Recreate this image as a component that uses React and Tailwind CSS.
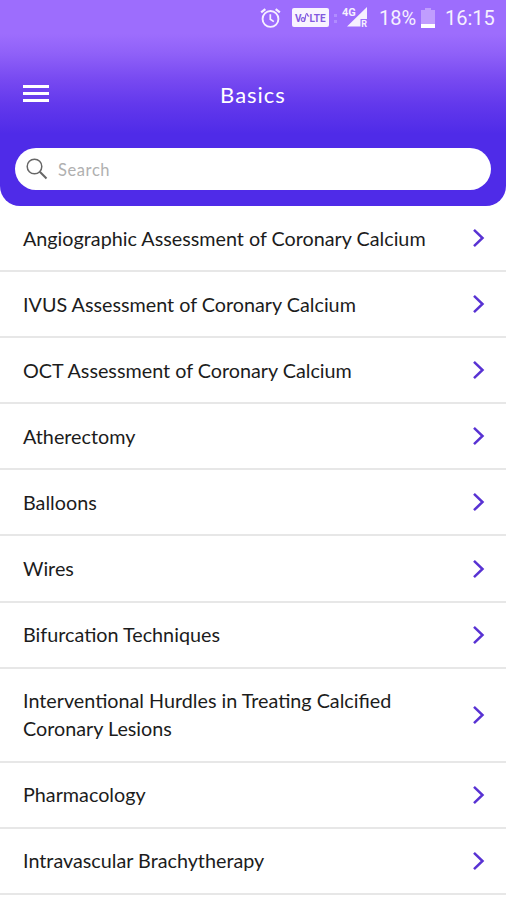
const topics = [
    'Angiographic Assessment of Coronary Calcium',
    'IVUS Assessment of Coronary Calcium',
    'OCT Assessment of Coronary Calcium',
    'Atherectomy',
    'Balloons',
    'Wires',
    'Bifurcation Techniques',
    'Interventional Hurdles in Treating Calcified Coronary Lesions',
    'Pharmacology',
    'Intravascular Brachytherapy',
];

function AlarmIcon() {
    return (
        <svg width="21" height="22" viewBox="0 0 22 22" fill="none" stroke="currentColor" strokeWidth="2">
            <circle cx="11" cy="12" r="8.3" />
            <path d="M10.8 7V12.3l3.7 2.5" strokeWidth="1.8" />
            <path d="M1.2 5.2 5.6 1.6M20.8 5.2 16.4 1.6" strokeWidth="2.3" />
        </svg>
    );
}

function VolteIcon() {
    return (
        <svg width="37" height="19" viewBox="0 0 37 19">
            <rect width="37" height="19" rx="2" fill="#f8f3ff" />
            <g fill="#8358e0" fontFamily="Roboto, sans-serif" fontSize="10" fontWeight="700">
                <text x="3" y="14">V</text>
                <text x="8.5" y="14" fontSize="8.5">o</text>
                <text x="17.5" y="14">LTE</text>
            </g>
            <path d="M12 13.5c1.5 0 1.2-8 2.7-8s0 3 2.5 2.5" fill="none" stroke="#8358e0" strokeWidth="1.2" />
        </svg>
    );
}

function SignalIcon() {
    return (
        <svg width="26" height="22" viewBox="0 0 26 22" fill="currentColor">
            <path d="M5 20.5 25 1v12h-6.5v7.5z" />
            <text x="0" y="9.5" fontSize="11" fontWeight="700" fontFamily="Roboto, sans-serif">4G</text>
            <text x="19.3" y="20.5" fontSize="9" fontWeight="700" fontFamily="Roboto, sans-serif">R</text>
        </svg>
    );
}

function BatteryIcon() {
    return (
        <svg width="14" height="20" viewBox="0 0 14 20">
            <path d="M4 0h6v2h4v14H0V2h4z" fill="#c09dfe" />
            <path d="M0 16h14v4H0z" fill="#fff" />
        </svg>
    );
}

function StatusBar() {
    return (
        <div className="flex h-9 items-center pl-[260px] font-[Roboto,sans-serif] text-xl text-[#f6f0ff]">
            <AlarmIcon />
            <span className="ml-[11px] mt-[-2px]"><VolteIcon /></span>
            <span className="ml-[5px] flex flex-col gap-[3px]">
                <span className="size-[3px] bg-[#b08cff]" />
                <span className="size-[3px] bg-[#b08cff]" />
            </span>
            <span className="ml-[5px] mt-[-3px]"><SignalIcon /></span>
            <span className="ml-[11px] w-[38px]">18%</span>
            <span className="ml-[4px]"><BatteryIcon /></span>
            <span className="ml-[10px]">16:15</span>
        </div>
    );
}

function Header() {
    return (
        <header className="h-[206px] rounded-b-[20px] bg-[linear-gradient(to_bottom,#9d6dfd_0px,#9d6dfd_34px,#8f60f8_54px,#7749f1_80px,#6238ec_105px,#4f2be8_134px,#4f2be8_206px)]">
            <StatusBar />
            <div className="grid h-28 grid-cols-[1fr_auto_1fr] items-center px-[23px] pt-[3px] text-white">
                <button aria-label="Menu" className="flex w-[26px] flex-col gap-[4px]">
                    <span className="h-[3px] bg-white" />
                    <span className="h-[3px] bg-white" />
                    <span className="h-[3px] bg-white" />
                </button>
                <h1 className="pt-px font-[Lato,sans-serif] text-[22px] tracking-[1px]">Basics</h1>
            </div>
            <label className="mx-[15px] flex h-[42px] items-center rounded-full bg-white pl-[11px]">
                <svg width="22" height="22" viewBox="0 0 22 22" fill="none" stroke="#666" strokeWidth="1.5">
                    <circle cx="8.5" cy="8.5" r="7.3" />
                    <path d="m13.8 13.8 6.7 6.7" strokeWidth="2" />
                </svg>
                <input
                    type="text"
                    placeholder="Search"
                    className="ml-[10px] flex-1 bg-transparent pt-[3px] font-[Lato,sans-serif] text-[16.5px] tracking-[0.6px] outline-none placeholder:text-[#b0b0b0]"
                />
            </label>
        </header>
    );
}

export default function App() {
    return (
        <div className="h-[900px] w-full overflow-hidden bg-white">
            <Header />
            <ul className="font-[Lato,sans-serif] text-[19.75px] leading-7 text-[#1c1c1c]">
                {topics.map((topic) => (
                    <li
                        key={topic}
                        className="flex min-h-[66.1px] items-center justify-between border-b-2 border-[#e7e7e7] pt-[18.5px] pb-[17.5px] pr-[21px] pl-[23px]"
                    >
                        <span className="max-w-[410px]">{topic}</span>
                        <svg className="-mt-px" width="13" height="20" viewBox="0 0 13 20" fill="none" stroke="#5832d3" strokeWidth="2.5">
                            <path d="m2 1.8 8.5 8.2L2 18.2" />
                        </svg>
                    </li>
                ))}
            </ul>
        </div>
    );
}
